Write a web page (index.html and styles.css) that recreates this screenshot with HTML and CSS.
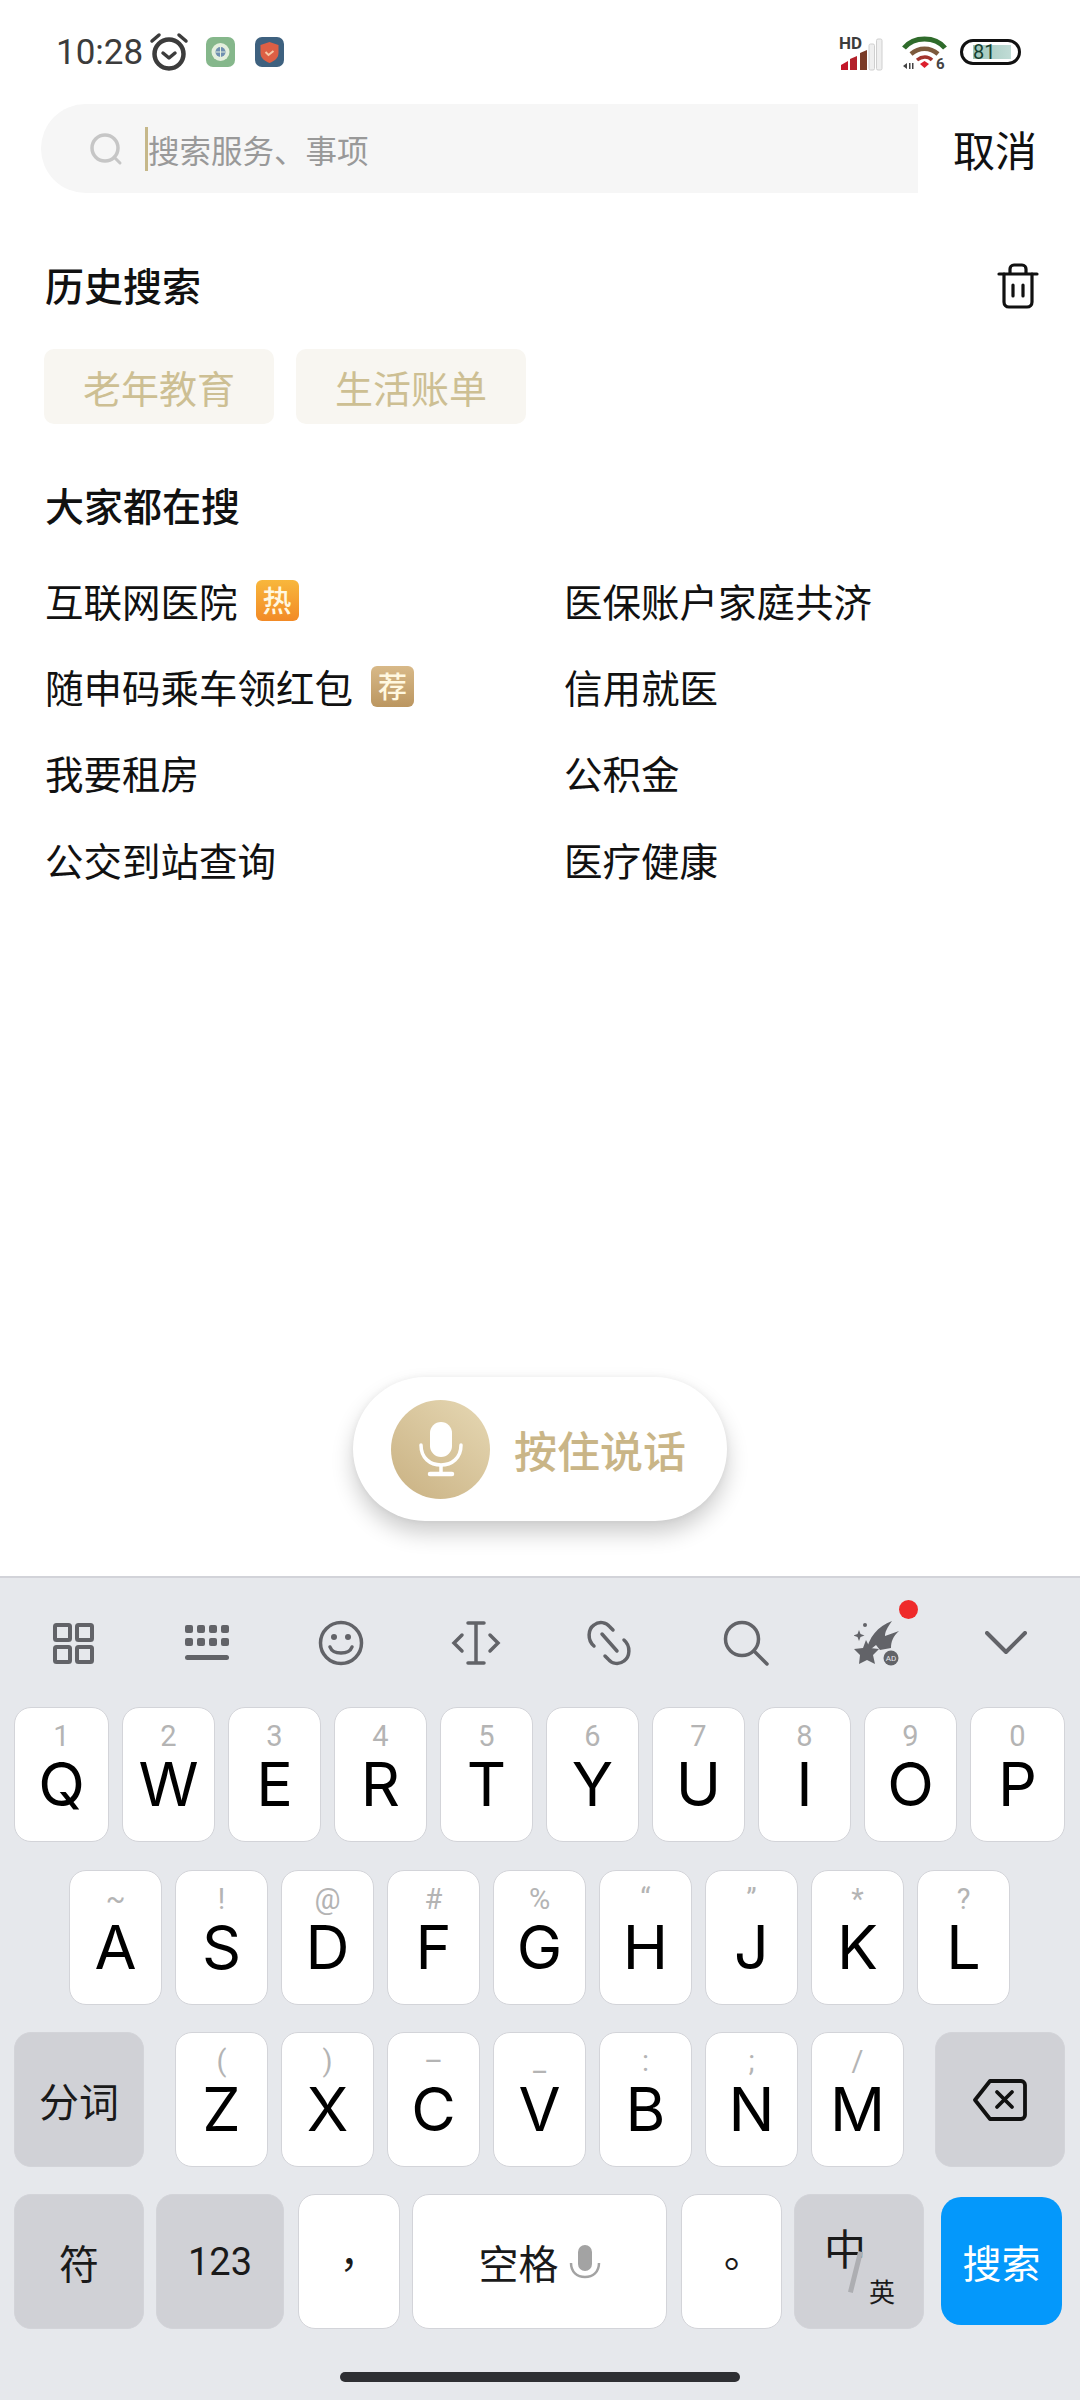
FILE: index.html
```html
<!DOCTYPE html>
<html lang="zh-CN">
<head>
    <meta charset="utf-8">
    <title>搜索</title>
    <link rel="stylesheet" href="styles.css">
</head>
<body>
<div class="page">
    <!-- Status bar -->
    <div class="status">
        <div class="status-left">
            <span class="clock">10:28</span>
            <svg class="alarm" width="40" height="40" viewBox="0 0 40 40" fill="none" stroke="#3c3c3c">
                <circle cx="20" cy="22" r="14.5" stroke-width="4.5"/>
                <path d="M14 21l6 5 6-5" stroke-width="3.5" stroke-linecap="round" stroke-linejoin="round"/>
                <path d="M3 9l7-6M37 9l-7-6" stroke-width="3.5" stroke-linecap="round"/>
            </svg>
            <svg class="app-green" width="29" height="30" viewBox="0 0 29 30">
                <rect width="29" height="30" rx="7" fill="#85b78b"/>
                <circle cx="14.5" cy="15" r="9" fill="#e4efdd"/>
                <circle cx="14.5" cy="15" r="5" fill="#6f8fb0"/>
                <path d="M14.5 10v10M10 15h9" stroke="#e4efdd" stroke-width="1"/>
            </svg>
            <svg class="app-blue" width="29" height="30" viewBox="0 0 29 30">
                <rect width="29" height="30" rx="7" fill="#3e617f"/>
                <path d="M14.5 5l9 3v8c0 5-4 8-9 10-5-2-9-5-9-10V8z" fill="#dd5f44"/>
                <path d="M10.5 15l3 3 5-4" fill="none" stroke="#f6c9a6" stroke-width="2"/>
            </svg>
        </div>
        <div class="status-right">
            <svg class="signal" width="44" height="44" viewBox="0 -4 44 44">
                <text x="0" y="14" class="sig-text">HD</text>
                <path d="M2 35v-5l7-4v9z" fill="#c3172a"/>
                <path d="M11 35V24l7-3v14z" fill="#b3202a"/>
                <path d="M21 35V18l7-3v20z" fill="#7a3a26"/>
                <rect x="30" y="9" width="5.500" height="26" rx="1.500" fill="#efefef" stroke="#cfcfcf"/>
                <rect x="37.500" y="4" width="5.500" height="31" rx="1.500" fill="#efefef" stroke="#cfcfcf"/>
            </svg>
            <svg class="wifi" width="45" height="44" viewBox="0 0 45 44" fill="none">
                <path d="M2 14C12 2 33 2 43 14" stroke="#2f6b2b" stroke-width="5"/>
                <path d="M9 20c8-7 19-7 27 0" stroke="#7d5a3c" stroke-width="4.500"/>
                <path d="M15 26c5-4 11-4 15 0" stroke="#a3332c" stroke-width="3.500"/>
                <path d="M18 30l4.500-3 4.500 3-4.500 4z" fill="#dc1f2e"/>
                <path d="M1 32l4-3v6zM7 29h1.500v6H7zM10 29h1.500v6H10z" fill="#444"/>
                <text x="34" y="35" class="sig-six">6</text>
            </svg>
            <div class="battery"><span class="battery-level">81</span></div>
        </div>
    </div>

    <!-- Search field -->
    <div class="search-row">
        <div class="search-box">
            <svg class="search-icon" width="34" height="34" viewBox="0 0 34 34" fill="none" stroke="#c6c6c6">
                <circle cx="16" cy="16" r="13" stroke-width="3.500"/>
                <path d="M26 26l5 5" stroke-width="3" stroke-linecap="round"/>
            </svg>
            <span class="caret"></span>
            <span class="placeholder">搜索服务、事项</span>
        </div>
        <span class="cancel">取消</span>
    </div>

    <div class="content">
        <div class="section-head">
            <span class="section-title">历史搜索</span>
            <svg class="trash" width="42" height="46" viewBox="0 0 42 46" fill="none" stroke="#111" stroke-width="3.200" stroke-linecap="round" stroke-linejoin="round">
                <path d="M2 11h38"/>
                <path d="M13 10V6c0-2 1.500-4 4-4h8c2.500 0 4 2 4 4v4"/>
                <path d="M7 11v28c0 3 2 5 5 5h18c3 0 5-2 5-5V11"/>
                <path d="M16 22v11M26 22v11"/>
            </svg>
        </div>
        <div class="chips">
            <span class="chip">老年教育</span>
            <span class="chip">生活账单</span>
        </div>

        <div class="section-title hot-title">大家都在搜</div>
        <div class="hot-list">
            <div class="hot-item">互联网医院<span class="tag tag-hot">热</span></div>
            <div class="hot-item">医保账户家庭共济</div>
            <div class="hot-item">随申码乘车领红包<span class="tag tag-rec">荐</span></div>
            <div class="hot-item">信用就医</div>
            <div class="hot-item">我要租房</div>
            <div class="hot-item">公积金</div>
            <div class="hot-item">公交到站查询</div>
            <div class="hot-item">医疗健康</div>
        </div>

        <div class="voice">
            <span class="voice-circle">
                <svg width="46" height="56" viewBox="0 0 46 56" fill="none" stroke="#fff">
                    <rect x="12" y="1" width="22" height="35" rx="11" fill="#fff" stroke="none"/>
                    <path d="M3 24c0 13 9 20 20 20s20-7 20-20" stroke-width="3.500" stroke-linecap="round"/>
                    <path d="M23 44v8" stroke-width="3.500"/>
                    <path d="M12 53h22" stroke-width="4.500" stroke-linecap="round"/>
                </svg>
            </span>
            <span class="voice-label">按住说话</span>
        </div>
    </div>

    <!-- Keyboard -->
    <div class="keyboard">
        <div class="kb-tools">
            <svg class="tool" width="42" height="42" viewBox="0 0 42 42" fill="none" stroke="#626368" stroke-width="4">
                <rect x="3" y="3" width="15" height="15" rx="1.500"/>
                <rect x="25" y="3" width="15" height="15" rx="1.500"/>
                <rect x="3" y="25" width="15" height="15" rx="1.500"/>
                <rect x="25" y="25" width="15" height="15" rx="1.500"/>
            </svg>
            <svg class="tool" width="46" height="38" viewBox="0 0 46 38" fill="#626368">
                <rect x="1" y="1" width="8" height="8" rx="2"/><rect x="13" y="1" width="8" height="8" rx="2"/>
                <rect x="25" y="1" width="8" height="8" rx="2"/><rect x="37" y="1" width="8" height="8" rx="2"/>
                <rect x="1" y="14" width="8" height="8" rx="2"/><rect x="13" y="14" width="8" height="8" rx="2"/>
                <rect x="25" y="14" width="8" height="8" rx="2"/><rect x="37" y="14" width="8" height="8" rx="2"/>
                <rect x="1" y="31" width="44" height="5" rx="2.500"/>
            </svg>
            <svg class="tool" width="46" height="46" viewBox="0 0 46 46" fill="none" stroke="#626368" stroke-width="3.500">
                <circle cx="23" cy="23" r="20.500"/>
                <circle cx="16" cy="17" r="3" fill="#626368" stroke="none"/>
                <circle cx="30" cy="17" r="3" fill="#626368" stroke="none"/>
                <path d="M12 27c3 8 19 8 22 0" stroke-linecap="round"/>
            </svg>
            <svg class="tool" width="50" height="44" viewBox="0 0 50 44" fill="none" stroke="#626368" stroke-width="3.500" stroke-linecap="round">
                <path d="M25 3v38M17 2h16M17 42h16"/>
                <path d="M11 14l-8 8 8 8M39 14l8 8-8 8"/>
            </svg>
            <svg class="tool" width="46" height="46" viewBox="0 0 46 46" fill="none" stroke="#626368" stroke-width="3.500" stroke-linecap="round">
                <path d="M8 26C1 20 2 9 8 5c5-4 12-3 16 2l3 3"/>
                <path d="M38 20c7 6 6 17 0 21-5 4-12 3-16-2l-3-3"/>
                <path d="M16 14l15 17"/>
            </svg>
            <svg class="tool" width="46" height="46" viewBox="0 0 46 46" fill="none" stroke="#626368" stroke-width="3.500" stroke-linecap="round">
                <circle cx="19" cy="19" r="16.500"/>
                <path d="M31 31l13 13"/>
            </svg>
            <div class="tool tool-ad">
                <svg width="46" height="46" viewBox="0 0 46 46" fill="#626368">
                    <path d="M12 33C14 18 24 6 38 1c-5 7-7 11-7 15l14-5c-6 5-8 11-8 17l-11 2-4-5z"/>
                    <path d="M12 20l4 8 9 1-6 6 2 9-8-4-8 4 1-9-6-6 9-1z"/>
                    <circle cx="11" cy="5" r="2"/>
                    <path d="M5 10l1.500 4 4 1.500-4 1.500-1.500 4-1.500-4-4-1.500 4-1.500z"/>
                    <circle cx="37" cy="38" r="7.500"/>
                    <text x="37" y="41" class="ad-text">AD</text>
                </svg>
                <span class="red-dot"></span>
            </div>
            <svg class="tool" width="42" height="24" viewBox="0 0 42 24" fill="none" stroke="#626368" stroke-width="4" stroke-linecap="round" stroke-linejoin="round">
                <path d="M2 2l19 19L40 2"/>
            </svg>
        </div>

        <div class="kb-row kb-row-top">
            <div class="key key-edge"><span class="hint">1</span><span class="cap">Q</span></div>
            <div class="key"><span class="hint">2</span><span class="cap">W</span></div>
            <div class="key"><span class="hint">3</span><span class="cap">E</span></div>
            <div class="key"><span class="hint">4</span><span class="cap">R</span></div>
            <div class="key"><span class="hint">5</span><span class="cap">T</span></div>
            <div class="key"><span class="hint">6</span><span class="cap">Y</span></div>
            <div class="key"><span class="hint">7</span><span class="cap">U</span></div>
            <div class="key"><span class="hint">8</span><span class="cap">I</span></div>
            <div class="key"><span class="hint">9</span><span class="cap">O</span></div>
            <div class="key key-edge"><span class="hint">0</span><span class="cap">P</span></div>
        </div>
        <div class="kb-row kb-row-mid">
            <div class="key"><span class="hint">~</span><span class="cap">A</span></div>
            <div class="key"><span class="hint">!</span><span class="cap">S</span></div>
            <div class="key"><span class="hint">@</span><span class="cap">D</span></div>
            <div class="key"><span class="hint">#</span><span class="cap">F</span></div>
            <div class="key"><span class="hint">%</span><span class="cap">G</span></div>
            <div class="key"><span class="hint">“</span><span class="cap">H</span></div>
            <div class="key"><span class="hint">”</span><span class="cap">J</span></div>
            <div class="key"><span class="hint">*</span><span class="cap">K</span></div>
            <div class="key"><span class="hint">?</span><span class="cap">L</span></div>
        </div>
        <div class="kb-row">
            <div class="key key-fn key-side key-word key-split">分词</div>
            <div class="key"><span class="hint">(</span><span class="cap">Z</span></div>
            <div class="key"><span class="hint">)</span><span class="cap">X</span></div>
            <div class="key"><span class="hint">–</span><span class="cap">C</span></div>
            <div class="key"><span class="hint">_</span><span class="cap">V</span></div>
            <div class="key"><span class="hint">:</span><span class="cap">B</span></div>
            <div class="key"><span class="hint">;</span><span class="cap">N</span></div>
            <div class="key"><span class="hint">/</span><span class="cap">M</span></div>
            <div class="key key-fn key-side key-del">
                <svg width="54" height="42" viewBox="0 0 54 42" fill="none" stroke="#111" stroke-width="3.800" stroke-linejoin="round" stroke-linecap="round">
                    <path d="M17 2h31c2 0 4 1.500 4 4v30c0 2.500-2 4-4 4H17L2 21z"/>
                    <path d="M24 13l15 15M39 13L24 28"/>
                </svg>
            </div>
        </div>
        <div class="kb-row kb-row-last">
            <div class="key key-fn key-side key-word">符</div>
            <div class="key key-fn key-num">123</div>
            <div class="key key-punct key-comma">，</div>
            <div class="key key-space key-word">
                空格
                <svg width="32" height="36" viewBox="0 0 32 36" fill="none">
                    <rect x="9" y="1" width="14" height="26" rx="7" fill="#a3a3a3"/>
                    <path d="M2 19c0 9 6 14 14 14s14-5 14-14" stroke="#a3a3a3" stroke-width="2.500"/>
                </svg>
            </div>
            <div class="key key-punct key-stop">。</div>
            <div class="key key-fn key-side key-lang">
                <span class="lang-zh">中</span><span class="lang-slash"></span><span class="lang-en">英</span>
            </div>
            <div class="key key-go">搜索</div>
        </div>
        <div class="home-bar"></div>
    </div>
</div>
</body>
</html>
```

FILE: styles.css
```css
* {
    box-sizing: border-box;
}

body {
    margin: 0;
    background: #fff;
    font-family: "Noto Sans CJK SC", "Noto Sans", sans-serif;
    color: #111;
}

.page {
    display: flex;
    flex-direction: column;
    width: 1080px;
    height: 2400px;
    overflow: hidden;
}

/* status bar */
.status {
    display: flex;
    justify-content: space-between;
    align-items: center;
    height: 104px;
    padding: 0 59px 0 56px;
}

.status-left,
.status-right {
    display: flex;
    align-items: center;
}

.clock {
    font-family: Roboto, sans-serif;
    font-size: 35px;
    letter-spacing: 0;
    color: #3c3c3c;
}

.alarm {
    margin-left: 6px;
}

.app-green {
    margin-left: 17px;
}

.app-blue {
    margin-left: 20px;
}

.sig-text {
    font-family: Roboto, sans-serif;
    font-size: 17px;
    font-weight: 700;
    fill: #3c3c3c;
}

.sig-six {
    font-family: Roboto, sans-serif;
    font-size: 15px;
    font-weight: 700;
    fill: #444;
}

.signal {
    margin-bottom: -1px;
}

.wifi {
    margin: 0 0 -7px 19px;
}

.battery {
    display: flex;
    align-items: center;
    width: 61px;
    height: 26px;
    margin-left: 13px;
    padding: 3px 5px 3px 10px;
    border: 3px solid #111;
    border-radius: 13px;
}

.battery-level {
    width: 38px;
    height: 100%;
    background: linear-gradient(90deg, #9fc7bb, #c1dcd6);
    font-family: Roboto, sans-serif;
    font-size: 20px;
    line-height: 15px;
    color: #15402f;
}

/* search */
.search-row {
    display: flex;
    align-items: center;
    justify-content: space-between;
    padding: 0 43px 0 41px;
}

.search-box {
    display: flex;
    align-items: center;
    width: 877px;
    height: 89px;
    padding-left: 48px;
    background: #f6f6f6;
    border-radius: 45px 0 0 45px;
}

.caret {
    width: 3px;
    height: 44px;
    margin-left: 22px;
    background: #c6b88a;
}

.placeholder {
    font-size: 31.5px;
    color: #999;
}

.cancel {
    font-size: 42px;
    color: #111;
}

/* history and hot searches */
.content {
    display: flex;
    flex-direction: column;
    flex: 1;
    padding: 0 41px 55px 45px;
}

.section-head {
    display: flex;
    justify-content: space-between;
    align-items: center;
    margin-top: 63px;
}

.trash {
    margin-top: 3px;
}

.section-title {
    font-size: 39px;
    font-weight: 500;
    line-height: 56px;
    color: #111;
}

.chips {
    display: flex;
    gap: 22px;
    margin: 37px 0 0 -1px;
}

.chip {
    width: 230px;
    height: 75px;
    background: #f8f6f1;
    border-radius: 10px;
    font-size: 38px;
    line-height: 75px;
    text-align: center;
    color: #cdbf93;
}

.hot-title {
    margin-top: 52px;
}

.hot-list {
    display: grid;
    grid-template-columns: 519px 1fr;
    grid-auto-rows: 86.2px;
    margin-top: 25px;
    font-size: 38.500px;
}

.hot-item {
    display: flex;
    align-items: center;
    line-height: 86px;
    color: #111;
}

.tag {
    width: 43px;
    height: 41px;
    margin-left: 18px;
    border-radius: 6px;
    font-size: 29px;
    font-weight: 500;
    line-height: 39px;
    text-align: center;
    color: #fff8e0;
}

.tag-hot {
    background: linear-gradient(180deg, #f8b73c, #f28a26);
}

.tag-rec {
    background: linear-gradient(180deg, #d8b988, #bb9660);
}

.voice {
    display: flex;
    align-items: center;
    align-self: center;
    width: 374px;
    height: 144px;
    margin: auto 0 0 -4px;
    padding-left: 38px;
    background: #fff;
    border-radius: 72px;
    box-shadow: 0 12px 22px rgba(0, 0, 0, 0.2), 0 0 6px rgba(0, 0, 0, 0.05);
}

.voice-circle {
    display: flex;
    align-items: center;
    justify-content: center;
    width: 99px;
    height: 99px;
    border-radius: 50%;
    background: linear-gradient(40deg, #c9b182, #e6d8b4);
}

.voice-label {
    margin-left: 24px;
    font-size: 43px;
    font-weight: 500;
    color: #c9b587;
}

/* keyboard */
.keyboard {
    display: flex;
    flex-direction: column;
    height: 824px;
    padding: 0 14px;
    background: #e6e8ec;
    border-top: 2px solid #d2d3d9;
}

.kb-tools {
    display: flex;
    align-items: center;
    height: 129px;
}

.tool {
    flex: none;
}

.tool-ad {
    display: flex;
    position: relative;
}

.ad-text {
    font-family: Roboto, sans-serif;
    font-size: 8px;
    text-anchor: middle;
    fill: #e6e8ec;
}

.red-dot {
    position: absolute;
    top: -20px;
    right: -18px;
    width: 19px;
    height: 19px;
    border-radius: 50%;
    background: #ef2a2a;
}

.kb-tools .tool:nth-child(1) { margin-left: 38px; }
.kb-tools .tool:nth-child(2) { margin-left: 90px; }
.kb-tools .tool:nth-child(3) { margin-left: 88px; }
.kb-tools .tool:nth-child(4) { margin-left: 87px; }
.kb-tools .tool:nth-child(5) { margin-left: 85px; }
.kb-tools .tool:nth-child(6) { margin-left: 91px; }
.kb-tools .tool:nth-child(7) { margin-left: 85px; }
.kb-tools .tool:nth-child(8) { margin-left: 85px; }

.kb-row {
    display: flex;
    gap: 13px;
    margin-bottom: 27px;
}

.kb-row-top {
    margin-bottom: 28px;
}

.kb-row-mid {
    padding-left: 55px;
}

.key {
    display: flex;
    flex-direction: column;
    align-items: center;
    flex: none;
    width: 93px;
    height: 135px;
    padding-top: 12px;
    background: #fff;
    border: 1px solid #d3d4d9;
    border-radius: 17px;
}

.key-edge {
    width: 95px;
}

.hint {
    height: 32px;
    font-family: Roboto, sans-serif;
    font-size: 29px;
    line-height: 32px;
    color: #b4b4b4;
}

.cap {
    height: 64px;
    font-family: Inter, sans-serif;
    font-size: 61px;
    line-height: 64px;
    color: #000;
}

.key-fn {
    background: #d0d1d6;
}

.key-side {
    width: 130px;
}

.key-word,
.key-del,
.key-num,
.key-punct,
.key-lang {
    flex-direction: row;
    justify-content: center;
    padding-top: 0;
    font-size: 40px;
    color: #1a1a1a;
}

.key-split {
    margin-right: 18px;
}

.key-del {
    margin-left: 18px;
}

.kb-row-last {
    gap: 12px;
}

.key-num {
    width: 128px;
    font-family: Roboto, sans-serif;
    font-size: 38px;
}

.key-punct {
    width: 102px;
    font-family: "Noto Sans CJK TC", sans-serif;
    font-size: 40px;
}

.key-comma {
    margin-left: 2px;
}

.key-stop {
    width: 101px;
    margin-left: 2px;
}

.key-space {
    width: 255px;
    gap: 10px;
}

.key-lang {
    position: relative;
}

.lang-zh {
    position: absolute;
    left: 29px;
    top: 27px;
    font-size: 42px;
    line-height: 50px;
}

.lang-slash {
    position: absolute;
    left: 58px;
    top: 56px;
    width: 5px;
    height: 42px;
    background: #adaeb2;
    transform: rotate(14deg);
}

.lang-en {
    position: absolute;
    left: 74px;
    top: 78px;
    font-size: 26px;
    line-height: 36px;
}

.key-go {
    flex-direction: row;
    justify-content: center;
    align-items: center;
    width: 121px;
    height: 128px;
    margin: 3px 0 0 5px;
    padding-top: 0;
    background: #0498fb;
    border: 0;
    border-radius: 20px;
    font-size: 39px;
    color: #fff;
}

.home-bar {
    align-self: center;
    width: 400px;
    height: 10px;
    margin-top: 16px;
    background: #2e2f33;
    border-radius: 5px;
}
```
